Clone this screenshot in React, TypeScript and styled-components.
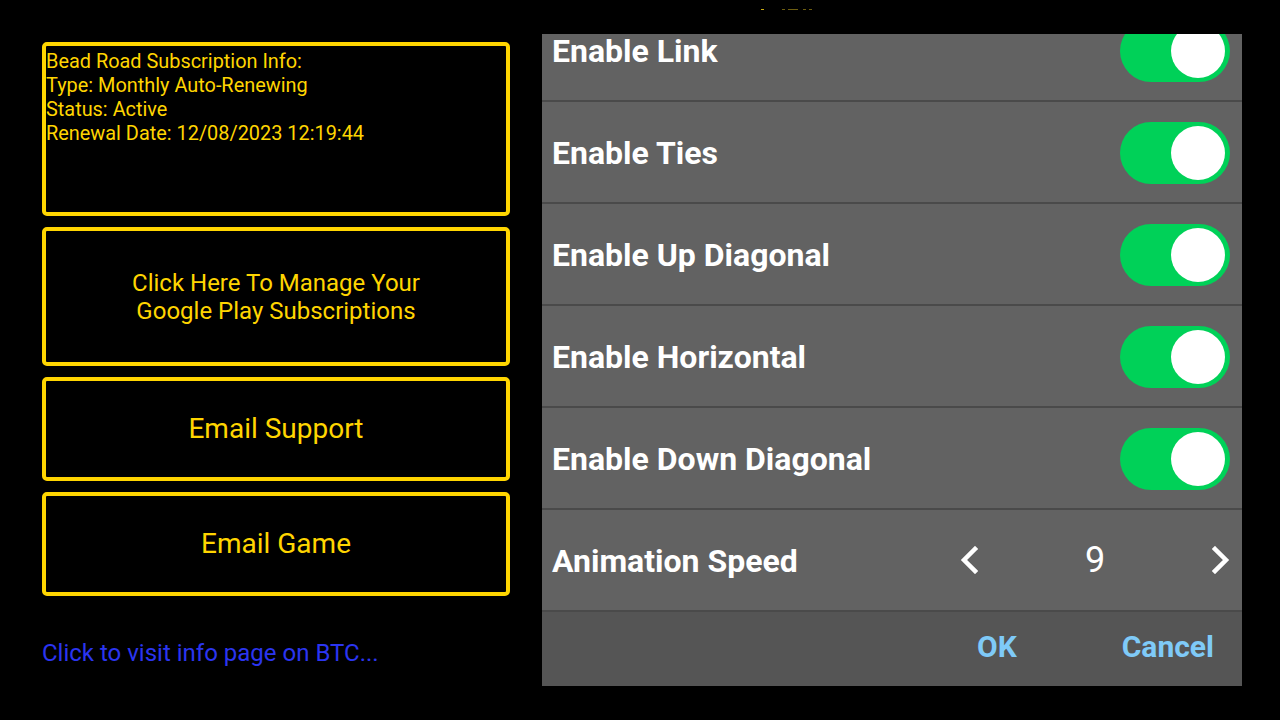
import React, { useLayoutEffect, useRef } from 'react';
import styled, { createGlobalStyle } from 'styled-components';

const GlobalStyle = createGlobalStyle`
  html, body {
    margin: 0;
    padding: 0;
    background: #000;
    width: 1280px;
    height: 720px;
    overflow: hidden;
  }
  body {
    font-family: Roboto, "Liberation Sans", sans-serif;
  }
`;

const Page = styled.div`
  width: 1280px;
  height: 720px;
  display: flex;
  flex-direction: column;
  background: #000;
`;

const TopStrip = styled.div`
  height: 34px;
  box-sizing: border-box;
  padding-top: 9px;
  display: flex;
  align-items: flex-start;
`;

const Speck = styled.span<{ $x: number; $w: number; $dim?: boolean }>`
  display: block;
  margin-left: ${(p) => p.$x}px;
  width: ${(p) => p.$w}px;
  height: 1px;
  background: ${(p) => (p.$dim ? '#6e5e10' : '#c9aa10')};
`;

const Main = styled.div`
  display: flex;
  padding-left: 42px;
  gap: 32px;
  height: 652px;
`;

const LeftColumn = styled.div`
  width: 468px;
  padding-top: 8px;
  display: flex;
  flex-direction: column;
  gap: 11px;
`;

const Box = styled.div<{ $h: number; $center?: boolean }>`
  box-sizing: border-box;
  height: ${(p) => p.$h}px;
  border: 4px solid #ffd500;
  border-radius: 5px;
  color: #ffd500;
  display: flex;
  ${(p) =>
    p.$center
      ? 'align-items: center; justify-content: center; text-align: center;'
      : 'flex-direction: column; padding: 4px 0 0 0;'}
`;

const InfoLine = styled.div`
  font-size: 19.9px;
  line-height: 24px;
  white-space: nowrap;
`;

const ManageText = styled.div`
  font-size: 24px;
  line-height: 28px;
`;

const BigLabel = styled.div`
  font-size: 28px;
  line-height: 32px;
`;

const InfoLink = styled.a`
  margin-top: 32px;
  font-size: 24px;
  line-height: 28px;
  color: #2b35f0;
  text-decoration: none;
`;

const Dialog = styled.div`
  width: 700px;
  height: 652px;
  background: #626262;
  overflow: hidden;
  display: flex;
  flex-direction: column;
`;

const Scroller = styled.div`
  height: 652px;
  overflow-y: scroll;
  scrollbar-width: none;
  &::-webkit-scrollbar {
    display: none;
  }
`;

const Row = styled.div`
  box-sizing: border-box;
  height: 102px;
  border-bottom: 2px solid #4a4a4a;
  padding: 0 12px 0 10px;
  display: flex;
  align-items: center;
  justify-content: space-between;
`;

const RowLabel = styled.div`
  color: #fff;
  font-weight: 700;
  font-size: 32px;
  padding-top: 2px;
`;

const Toggle = styled.div`
  box-sizing: border-box;
  width: 110px;
  height: 62px;
  border-radius: 31px;
  background: #00d158;
  display: flex;
  align-items: center;
  justify-content: flex-end;
  padding-right: 5px;
  margin-top: 1px;
`;

const Knob = styled.div`
  width: 54px;
  height: 54px;
  border-radius: 50%;
  background: #fff;
`;

const Stepper = styled.div`
  width: 270px;
  display: flex;
  align-items: center;
  justify-content: space-between;
`;

const StepValue = styled.div`
  color: #fff;
  font-size: 36px;
  line-height: 40px;
`;

const Footer = styled.div`
  box-sizing: border-box;
  height: 74px;
  background: #555555;
  display: flex;
  align-items: center;
  justify-content: flex-end;
  padding: 0 28px 6px 0;
  gap: 105px;
`;

const FooterButton = styled.div`
  color: #7fcaf8;
  font-weight: 700;
  font-size: 30px;
`;

const Chevron = ({ dir }: { dir: 'left' | 'right' }) => (
  <svg width="18" height="28" viewBox="0 0 18 28">
    <path
      d={dir === 'left' ? 'M15 3 L4 14 L15 25' : 'M3 3 L14 14 L3 25'}
      fill="none"
      stroke="#fff"
      strokeWidth="4.5"
      strokeLinecap="square"
    />
  </svg>
);

const toggles = [
  'Enable Link',
  'Enable Ties',
  'Enable Up Diagonal',
  'Enable Horizontal',
  'Enable Down Diagonal',
];

const App = () => {
  const scrollRef = useRef<HTMLDivElement>(null);

  useLayoutEffect(() => {
    if (scrollRef.current) scrollRef.current.scrollTop = 34;
  }, []);

  return (
    <Page>
      <GlobalStyle />
      <TopStrip>
        <Speck $x={761} $w={3} />
        <Speck $x={18} $w={3} $dim />
        <Speck $x={3} $w={10} $dim />
        <Speck $x={5} $w={3} $dim />
        <Speck $x={3} $w={3} $dim />
      </TopStrip>
      <Main>
        <LeftColumn>
          <Box $h={174}>
            <InfoLine>Bead Road Subscription Info:</InfoLine>
            <InfoLine>Type: Monthly Auto-Renewing</InfoLine>
            <InfoLine>Status: Active</InfoLine>
            <InfoLine>Renewal Date: 12/08/2023 12:19:44</InfoLine>
          </Box>
          <Box $h={139} $center>
            <ManageText>
              Click Here To Manage Your
              <br />
              Google Play Subscriptions
            </ManageText>
          </Box>
          <Box $h={104} $center>
            <BigLabel>Email Support</BigLabel>
          </Box>
          <Box $h={104} $center>
            <BigLabel>Email Game</BigLabel>
          </Box>
          <InfoLink href="#">Click to visit info page on BTC...</InfoLink>
        </LeftColumn>
        <Dialog>
          <Scroller ref={scrollRef}>
            {toggles.map((label) => (
              <Row key={label}>
                <RowLabel>{label}</RowLabel>
                <Toggle>
                  <Knob />
                </Toggle>
              </Row>
            ))}
            <Row>
              <RowLabel>Animation Speed</RowLabel>
              <Stepper>
                <Chevron dir="left" />
                <StepValue>9</StepValue>
                <Chevron dir="right" />
              </Stepper>
            </Row>
            <Footer>
              <FooterButton>OK</FooterButton>
              <FooterButton>Cancel</FooterButton>
            </Footer>
          </Scroller>
        </Dialog>
      </Main>
    </Page>
  );
};

export default App;
